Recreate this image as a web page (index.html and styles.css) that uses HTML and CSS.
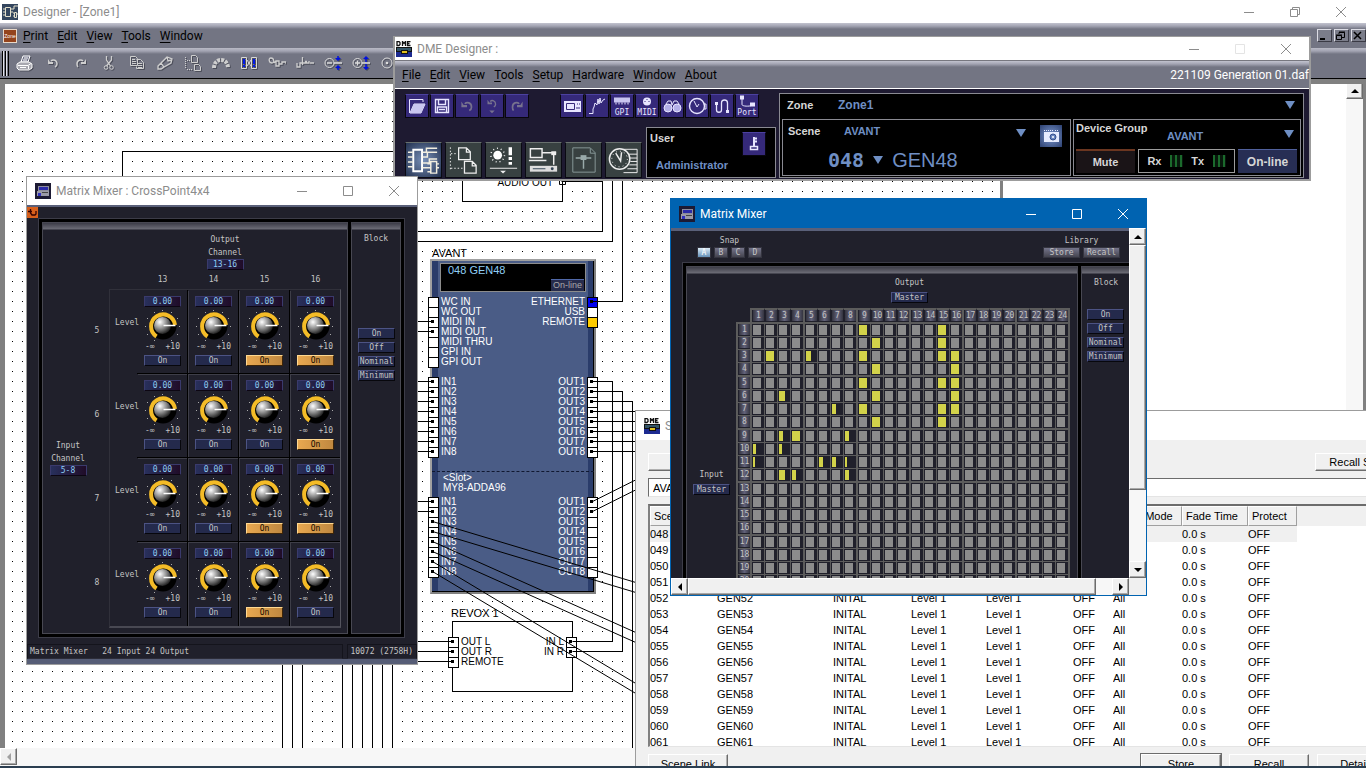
FILE: index.html
```html
<!DOCTYPE html>
<html lang="en">
<head>
    <meta charset="UTF-8">
    <meta name="viewport" content="width=device-width, initial-scale=1.0">
    <title>Designer - [Zone1]</title>
    <link rel="stylesheet" href="styles.css">
</head>
<body>
    <!-- Shared icons -->
    <svg class="defs" aria-hidden="true">
        <symbol id="i-mixer" viewBox="0 0 16 16">
            <rect width="16" height="16" fill="#1c1a33"/>
            <rect x="3.500" y="3.500" width="10" height="4" fill="#2b2ba8" stroke="#8c8c9c"/>
            <rect x="2" y="8" width="12" height="5" fill="#9a9aa8"/>
            <rect x="3" y="10" width="3" height="3" fill="#3030c0"/>
            <rect x="7" y="9" width="6" height="1" fill="#444"/>
        </symbol>
        <symbol id="i-dme" viewBox="0 0 16 16">
            <rect y="6" width="16" height="5" fill="#111"/>
            <rect y="11" width="16" height="5" fill="#1c2a90"/>
            <rect x="1" y="7" width="14" height="3" fill="#356"/>
            <rect x="5" y="9" width="7" height="4" fill="#111"/>
            <rect x="6" y="10" width="5" height="2" fill="#e0c020"/>
            <path d="M1 .5v4h2l1-1v-2l-1-1zM6.500 5V.5l1.500 2L9.500.5V5M14.500.5h-3v4h3M11.500 2.500h2" fill="none" stroke="#111" stroke-width="1.300"/>
        </symbol>
        <symbol id="i-min" viewBox="0 0 12 12"><path d="M1 6.500h10" fill="none" stroke="currentColor"/></symbol>
        <symbol id="i-max" viewBox="0 0 12 12"><path d="M1.500 1.500h9v9h-9z" fill="none" stroke="currentColor"/></symbol>
        <symbol id="i-close" viewBox="0 0 12 12"><path d="M1 1l10 10M11 1L1 11" fill="none" stroke="currentColor"/></symbol>
        <symbol id="i-restore" viewBox="0 0 12 12"><path d="M1.500 3.500h7v7h-7zM3.500 3.500v-2h7v7h-2" fill="none" stroke="currentColor"/></symbol>
        <symbol id="i-undo" viewBox="0 0 16 16"><path d="M6 6c2-2 6-1 6 3 0 1 0 2-2 3" fill="none" stroke="currentColor" stroke-width="1.500"/><path d="M3 4v5h5V7H5z" fill="currentColor"/></symbol>
        <symbol id="i-redo" viewBox="0 0 16 16"><path d="M10 6C8 4 4 5 4 9c0 1 0 2 1 3" fill="none" stroke="currentColor" stroke-width="1.500"/><path d="M13 4v5H8V7h3z" fill="currentColor"/></symbol>
    </svg>

    <!-- Designer main window -->
    <div class="designer">
        <div class="title-bar">
            <svg class="app-icon" viewBox="0 0 16 16"><rect width="16" height="16" fill="#34465e"/><path d="M3.500 3.500h5v9h-5zM1 5h2M1 8h2M1 11h2M9 5h3V2h4M9 8h2M12.500 8.500h2v5h-2zM11 9h1M11 12h1M15 10h1" fill="none" stroke="#e4e0cc"/></svg>
            <span class="title-text">Designer - [Zone1]</span>
            <div class="win-buttons">
                <button aria-label="Minimize"><svg><use href="#i-min"/></svg></button>
                <button aria-label="Restore"><svg><use href="#i-restore"/></svg></button>
                <button aria-label="Close"><svg><use href="#i-close"/></svg></button>
            </div>
        </div>
        <nav class="menu-bar">
            <span class="zone-badge">Zone</span>
            <a href="#"><u>P</u>rint</a>
            <a href="#"><u>E</u>dit</a>
            <a href="#"><u>V</u>iew</a>
            <a href="#"><u>T</u>ools</a>
            <a href="#"><u>W</u>indow</a>
            <div class="mdi-buttons">
                <button aria-label="Minimize zone"><svg viewBox="0 0 12 12"><path d="M2 9h5" stroke="#000" stroke-width="2"/></svg></button>
                <button aria-label="Restore zone"><svg viewBox="0 0 12 12"><path d="M1.500 5.500h5v4h-5zM1 5h6M4 4V2.500h5.500v5H7M4 2h6" fill="none" stroke="#000"/></svg></button>
                <button aria-label="Close zone"><svg viewBox="0 0 12 12"><path d="M2 2l7 7M9 2L2 9" stroke="#000" stroke-width="1.500"/></svg></button>
            </div>
        </nav>
        <div class="tool-bar">
            <span class="grip"></span>
            <button aria-label="Print"><svg viewBox="0 0 18 16"><path d="M5 7l2-6h7l-2 6z" fill="#73758a" stroke="#fff"/><path d="M1 9l3-2h9l3 2v4l-3 2H3l-2-2z" fill="#a8a8b0" stroke="#fff"/><path d="M2 10.500h10l3-2M12.500 11v3M4 12.500h6M8 3h4M7 5h4" fill="none" stroke="#fff"/></svg></button>
            <button aria-label="Undo"><svg><use href="#i-undo"/></svg></button>
            <button aria-label="Redo"><svg><use href="#i-redo"/></svg></button>
            <button aria-label="Cut"><svg viewBox="0 0 16 16"><path d="M5.500 1v4l4 6M10.500 1v4l-5 6" fill="none" stroke="currentColor" stroke-width="1.300"/><circle cx="5" cy="12.500" r="1.800" fill="none" stroke="currentColor"/><circle cx="10.500" cy="12.500" r="1.800" fill="none" stroke="currentColor"/></svg></button>
            <button aria-label="Copy"><svg viewBox="0 0 16 16"><path d="M1.500 1.500h5l2 2v7h-7zM3 4.500h3M3 6.500h4M3 8.500h4M7.500 4.500h4l3 3v6h-7v-2M9 8.500h4M9 10.500h4M9 12.500h4" fill="none" stroke="currentColor"/></svg></button>
            <button aria-label="Paste"><svg viewBox="0 0 16 16"><path d="M1 11l3-3 3 4-3 2H1zM4 8l6-6 5 2-1 4-7 4M10 2l1 4 4-1" fill="none" stroke="currentColor" stroke-width="1.300"/></svg></button>
            <button aria-label="Duplicate"><svg viewBox="0 0 16 16"><path d="M.5 2v12M2 14.500h5M2 5.500h3" stroke="currentColor" stroke-dasharray="1 1"/><path d="M6.500.5h4l2 2v5h-6zM9.500 9.500h4l2 2v4h-6z" fill="none" stroke="currentColor"/></svg></button>
            <button aria-label="Arc"><svg viewBox="0 0 18 16"><path d="M2 13c0-5 3-8 7-8s7 3 7 8" fill="none" stroke="currentColor" stroke-width="4" stroke-dasharray="3 1"/></svg></button>
            <button aria-label="Mirror"><svg viewBox="0 0 18 16"><path d="M1.500 2.500h5v11h-5zM11.500 2.500h5v11h-5zM7 5l4 6M11 5l-4 6" fill="none" stroke="#d8d8d8"/><path d="M4 4v5M4 10v2M14 4v5M14 10v2" stroke="#0018e8" stroke-width="2"/></svg></button>
            <button aria-label="Link"><svg viewBox="0 0 18 16"><path d="M3 3c-3 0-2 5 1 5s2-5-1-5M6 8l2-2M8 6h3v5H8zM11 9h3V7h4v2" fill="none" stroke="currentColor" stroke-width="1.300"/></svg></button>
            <button aria-label="Wire"><svg viewBox="0 0 18 16"><path d="M1 8v4h3V8h2M6.500 2v8M7 8h6v-2M14 8h4M9 6.500h2" fill="none" stroke="currentColor" stroke-width="1.300"/></svg></button>
            <button aria-label="Zoom out"><svg viewBox="0 0 18 16"><circle cx="5.500" cy="8" r="4.500" fill="none" stroke="#ddd"/><path d="M3 8h5M10 8h8" stroke="#ddd" stroke-width="1.300"/><path d="M14 1v2M14 15v-2" stroke="#0010e0" stroke-width="1.500"/><path d="M11 3h6l-3 3zM11 13h6l-3-3z" fill="#0010e0"/></svg></button>
            <button aria-label="Zoom in"><svg viewBox="0 0 18 16"><circle cx="5.500" cy="8" r="4.500" fill="none" stroke="#ddd"/><path d="M3 8h5M5.500 5.500v5M10 8h8" stroke="#ddd" stroke-width="1.300"/><path d="M14 3v4M14 13V9" stroke="#0010e0" stroke-width="1.500"/><path d="M11 4h6l-3-3zM11 12h6l-3 3z" fill="#0010e0"/></svg></button>
            <button aria-label="Zoom reset"><svg viewBox="0 0 18 16"><circle cx="7" cy="8" r="5" fill="none" stroke="#ddd"/><circle cx="7" cy="8" r="1.300" fill="#ddd"/></svg></button>
        </div>
        <div class="work-area">
            <div class="sheet">
                <div class="node node-audio"><span>AUDIO OUT</span></div>
                <div class="node-name name-avant">AVANT</div>
                <div class="node-name name-revox">REVOX 1</div>
                <div class="node avant">
                    <div class="display">
                        <span class="patch">048 GEN48</span>
                        <span class="online">On-line</span>
                    </div>
                    <div class="ports">
                        <ul>
                            <li>WC IN</li>
                            <li>WC OUT</li>
                            <li class="on">MIDI IN</li>
                            <li class="on">MIDI OUT</li>
                            <li>MIDI THRU</li>
                            <li>GPI IN</li>
                            <li>GPI OUT</li>
                        </ul>
                        <ul class="right">
                            <li class="on ethernet">ETHERNET</li>
                            <li>USB</li>
                            <li class="remote">REMOTE</li>
                        </ul>
                    </div>
                    <div class="ports">
                        <ul>
                            <li class="on">IN1</li><li class="on">IN2</li><li class="on">IN3</li><li class="on">IN4</li>
                            <li class="on">IN5</li><li class="on">IN6</li><li class="on">IN7</li><li class="on">IN8</li>
                        </ul>
                        <ul class="right">
                            <li class="on">OUT1</li><li class="on">OUT2</li><li class="on">OUT3</li><li class="on">OUT4</li>
                            <li class="on">OUT5</li><li class="on">OUT6</li><li class="on">OUT7</li><li class="on">OUT8</li>
                        </ul>
                    </div>
                    <div class="slot">&lt;Slot&gt;<br>MY8-ADDA96</div>
                    <div class="ports">
                        <ul>
                            <li class="on">IN1</li><li class="on">IN2</li><li class="on">IN3</li><li class="on">IN4</li>
                            <li class="on">IN5</li><li class="on">IN6</li><li class="on">IN7</li><li class="on">IN8</li>
                        </ul>
                        <ul class="right">
                            <li class="on">OUT1</li><li class="on">OUT2</li><li>OUT3</li><li>OUT4</li>
                            <li>OUT5</li><li>OUT6</li><li>OUT7</li><li>OUT8</li>
                        </ul>
                    </div>
                </div>
                <div class="node revox">
                    <div class="ports">
                        <ul>
                            <li class="on">OUT L</li>
                            <li class="on">OUT R</li>
                            <li class="on">REMOTE</li>
                        </ul>
                        <ul class="right">
                            <li class="on">IN L</li>
                            <li class="on">IN R</li>
                        </ul>
                    </div>
                </div>
                <!-- Wires between the nodes -->
                <svg class="wires">
                    <g transform="translate(-4.500 -83.500)" fill="none" stroke="#000">
                        <path d="M393 151H122V190"/>
                        <path d="M562 181H602V231H410M612 170V241H410M622 170V301H592"/>
                        <path d="M562 181v5M559 178h6v6h-6zM561 181h3"/>
                        <path d="M410 321h22M410 331h22M410 381h22M410 391h22M410 401h22M410 411h22M410 421h22M410 431h22M410 441h22M410 451h22M410 501h22M410 511h22"/>
                        <path d="M592 381H612V641H572M592 391H622V651H572M592 401H632V748"/>
                        <path d="M592 411h50M592 421h50M592 431h50M592 441h50M592 451h50"/>
                        <path d="M592 501L642 476M592 511L642 486M432 521L642 584M432 531L642 594M432 541L642 635M432 551L642 645M432 561L642 687M432 571L642 697"/>
                        <path d="M410 641h42M410 651h42M410 661h42"/>
                        <path d="M282 650v98M292 650v98M302 650v98M342 650v98M352 650v98M362 650v98M372 650v98M382 650v98M392 650v98"/>
                    </g>
                </svg>
            </div>
            <div class="sheet-side"></div>
            <div class="scroll vert main-scroll"><button class="arrow up" aria-label="Scroll up"></button></div>
        </div>
        <div class="scroll horz bottom-scroll"><button class="arrow left dim" aria-label="Scroll left"></button></div>
    </div>

    <!-- Scene manager window -->
    <div class="window scene-window">
        <div class="title-bar">
            <svg class="app-icon"><use href="#i-dme"/></svg>
            <span class="title-text">Scene Manager</span>
        </div>
        <div class="scene-body">
            <div class="scene-top">
                <button class="classic blank" aria-label="New"></button>
                <button class="classic">Recall Safe</button>
            </div>
            <input class="scene-combo" type="text" value="AVANT" aria-label="Device group">
            <div class="scene-list">
                <table>
                    <thead>
                        <tr><th>Scene</th><th></th><th></th><th></th><th></th><th></th><th>Fade Mode</th><th>Fade Time</th><th>Protect</th></tr>
                    </thead>
                    <tbody id="scenes"></tbody>
                </table>
            </div>
            <div class="scene-actions">
                <button class="classic">Scene Link</button>
                <button class="classic default">Store</button>
                <button class="classic">Recall</button>
                <button class="classic">Details</button>
            </div>
        </div>
    </div>

    <!-- DME Designer window -->
    <div class="window dme-window">
        <div class="title-bar">
            <svg class="app-icon"><use href="#i-dme"/></svg>
            <span class="title-text">DME Designer :</span>
            <div class="win-buttons">
                <button aria-label="Minimize"><svg><use href="#i-min"/></svg></button>
                <button class="off" aria-label="Maximize" disabled><svg><use href="#i-max"/></svg></button>
                <button aria-label="Close"><svg><use href="#i-close"/></svg></button>
            </div>
        </div>
        <nav class="menu-bar">
            <a href="#"><u>F</u>ile</a>
            <a href="#"><u>E</u>dit</a>
            <a href="#"><u>V</u>iew</a>
            <a href="#"><u>T</u>ools</a>
            <a href="#"><u>S</u>etup</a>
            <a href="#"><u>H</u>ardware</a>
            <a href="#"><u>W</u>indow</a>
            <a href="#"><u>A</u>bout</a>
            <span class="file-name">221109 Generation 01.daf</span>
        </nav>
        <div class="dme-body">
            <div class="dme-left">
                <div class="small-tools">
                    <div class="group">
                        <button aria-label="Open"><svg viewBox="0 0 20 20"><path d="M2.500 17V3.500H16V6M3 17l4-9h11l-4 9z" fill="none" stroke="#e8e6ff"/><path d="M3 17l4-9h11l-4 9z" fill="#c9c6f0"/></svg></button>
                        <button aria-label="Save"><svg viewBox="0 0 20 20"><path d="M3.500 3.500h13v13h-13zM6.500 3.500v5h7v-5M5.500 16v-5h9v5M7 13.500h6" fill="none" stroke="#e8e6ff" stroke-width="1.400"/></svg></button>
                        <button class="dim" aria-label="Undo"><svg><use href="#i-undo"/></svg></button>
                        <button class="dim" aria-label="Undo list"><svg viewBox="0 0 20 20"><use href="#i-undo" x="2" y="-1" width="16" height="16"/><path d="M7 15h6l-3 3z" fill="currentColor"/></svg></button>
                        <button class="dim" aria-label="Redo"><svg><use href="#i-redo"/></svg></button>
                    </div>
                    <div class="group">
                        <button aria-label="Panel"><svg viewBox="0 0 20 20"><rect x="2" y="5" width="17" height="11" fill="#e8e6ff"/><path d="M4.500 7.500h8v6h-8z" fill="none" stroke="#35297a"/><path d="M15 8h1M17 8h1M15 11v2M17 11v2" stroke="#35297a"/></svg></button>
                        <button aria-label="Monitor"><svg viewBox="0 0 20 20"><path d="M2 17.500h4V13l1-2 1-4 2 2 1-6 1 5 1-6 1 5 2-3 2-1" fill="none" stroke="#e8e6ff"/></svg></button>
                        <button aria-label="GPI"><svg viewBox="0 0 20 8"><rect x="2" width="16" height="5" fill="#c9c6f0"/><path d="M4 5v2M7 5v2M10 5v2M13 5v2M16 5v2" stroke="#e8e6ff"/></svg>GPI</button>
                        <button aria-label="MIDI"><svg viewBox="0 0 20 8"><circle cx="10" cy="4" r="4" fill="#e8e6ff"/><path d="M7.500 4h1M9.500 2h1M11.500 4h1" stroke="#35297a"/></svg>MIDI</button>
                        <button aria-label="Watch"><svg viewBox="0 0 20 20"><circle cx="6" cy="12" r="4" fill="#b4b0e8" stroke="#e8e6ff"/><circle cx="15" cy="12" r="4" fill="#b4b0e8" stroke="#e8e6ff"/><path d="M4 8l2-3h3l1 4 2-4h3l2 3" fill="none" stroke="#e8e6ff"/></svg></button>
                        <button aria-label="Clock"><svg viewBox="0 0 20 20"><circle cx="10" cy="10" r="7.500" fill="none" stroke="#e8e6ff" stroke-width="1.400"/><path d="M7 5l3 6 2-3M17 8h2v5h-2" fill="none" stroke="#e8e6ff"/></svg></button>
                        <button aria-label="Cable"><svg viewBox="0 0 20 20"><path d="M4.500 8v6c0 3 5 3 5 0V7c0-4 6-4 6 0v9" fill="none" stroke="#e8e6ff" stroke-width="1.300"/><path d="M3 6h3v3H3zM14 14h3v3h-3z" fill="#e8e6ff"/></svg></button>
                        <button aria-label="Port"><svg viewBox="0 0 20 12"><path d="M5 3v6c0 2 8 2 9 1" fill="none" stroke="#e8e6ff"/><path d="M3 0h4v4H3zM13 7h5v4h-5z" fill="#e8e6ff"/></svg>Port</button>
                    </div>
                </div>
                <div class="lower">
                    <div class="big-tools">
                        <button class="active" aria-label="Components"><svg viewBox="0 0 36 34"><path d="M7.500 6.500h9v22h-9z" fill="none" stroke="#fff" stroke-width="2"/><path d="M2 9h5M2 14h5M2 19h5M2 24h5M17 9h4V5h11M17 14h5v-5h10M17 20h7v-4h8M17 25h6M25.500 18.500h6v12h-6zM22 21h3M22 25h3M22 29h3M32 21h2M32 25h2" fill="none" stroke="#f2eee0" stroke-width="1.500"/></svg></button>
                        <button aria-label="Presets"><svg viewBox="0 0 36 34"><path d="M4.500 4v23M5 10.500h6M5 25.500h12" stroke="#eee" stroke-dasharray="1.500 2"/><path d="M13 4.500h8l4 4v8H13zM21 5v4h4M19 18.500h8l4 4v8H19zM27 19v4h4" fill="none" stroke="#eee" stroke-width="1.300"/></svg></button>
                        <button aria-label="Parameters"><svg viewBox="0 0 36 34"><circle cx="12" cy="12" r="4.500" fill="#fff"/><circle cx="12" cy="12" r="7" fill="none" stroke="#fff" stroke-width="1.500" stroke-dasharray="1 3"/><path d="M25 4v8M25 14v3M25 19v3" stroke="#fff" stroke-width="3.500"/><path d="M4 25.500h28" stroke="#eee"/><path d="M14.500 28h6l-3 3z" fill="#eee"/></svg></button>
                        <button aria-label="Devices"><svg viewBox="0 0 36 34"><path d="M4.500 5.500h12v9h-12zM3 17.500h16l2 0M17 9.500h14M28.500 10v12" fill="none" stroke="#eee" stroke-width="1.500"/><rect x="26" y="8" width="5" height="4" fill="#eee"/><rect x="4" y="23" width="28" height="6" fill="#ddd"/><path d="M7 26h13" stroke="#345"/><circle cx="27" cy="26" r="1.500" fill="#345"/></svg></button>
                        <button class="dim" aria-label="Page"><svg viewBox="0 0 36 34"><path d="M7 4.500h18l5 5v20H7zM25 5v5h5" fill="none" stroke="#899"/><path d="M10 15h16M18 15v11" stroke="#9aa" stroke-width="1.500"/><rect x="15" y="12" width="6" height="5" fill="#9aa"/></svg></button>
                        <button aria-label="Schedule"><svg viewBox="0 0 36 34"><path d="M18 6h14v24H18M22 11h10M24 15h8M25 18.500h7M24 22h8M22 26h10" fill="none" stroke="#eee"/><circle cx="14" cy="16" r="10.500" fill="#384141" stroke="#eee" stroke-width="1.500"/><circle cx="14" cy="16" r="8" fill="none" stroke="#eee" stroke-dasharray="1 3.200"/><path d="M10 10l5 8 1-9" fill="none" stroke="#eee" stroke-width="1.500"/></svg></button>
                    </div>
                    <div class="user-box">
                        <b>User</b>
                        <button class="key" aria-label="Security"><svg viewBox="0 0 16 16"><path d="M4.500 10.500h7v3h-7z" fill="none" stroke="#e8e6ff" stroke-width="1.500"/><path d="M8 1v9M8 2.500h3M8 5.500h3" stroke="#e8e6ff" stroke-width="2"/></svg></button>
                        <span>Administrator</span>
                    </div>
                </div>
            </div>
            <div class="dme-right">
                <div class="zone-row"><b>Zone</b><span class="value">Zone1</span><i class="drop"></i></div>
                <div class="boxes">
                    <div class="scene-box">
                        <div class="line"><b>Scene</b><span class="value">AVANT</span><i class="drop"></i>
                            <button class="camera" aria-label="Snapshot"><svg viewBox="0 0 22 22"><path d="M4 7h15v10H4z" fill="#e6ecff"/><path d="M4 5.500h9M15 5.500h4" stroke="#e6ecff" stroke-dasharray="1 1"/><circle cx="13" cy="12" r="3" fill="#6a86c0" stroke="#34508c"/><circle cx="13" cy="12" r="1" fill="#fff"/></svg></button>
                        </div>
                        <div class="current"><span class="digits">048</span><i class="drop"></i><span>GEN48</span></div>
                    </div>
                    <div class="device-box">
                        <b>Device Group</b>
                        <div class="line"><span class="value">AVANT</span><i class="drop"></i></div>
                        <div class="status">
                            <button class="mute">Mute</button>
                            <div class="rxtx">Rx <i class="leds"></i> Tx <i class="leds"></i></div>
                            <button class="online-btn">On-line</button>
                        </div>
                    </div>
                </div>
            </div>
        </div>
    </div>

    <!-- Matrix Mixer : CrossPoint4x4 -->
    <div class="window cross-window">
        <div class="title-bar">
            <svg class="app-icon"><use href="#i-mixer"/></svg>
            <span class="title-text">Matrix Mixer : CrossPoint4x4</span>
            <div class="win-buttons">
                <button aria-label="Minimize"><svg><use href="#i-min"/></svg></button>
                <button aria-label="Maximize"><svg><use href="#i-max"/></svg></button>
                <button aria-label="Close"><svg><use href="#i-close"/></svg></button>
            </div>
        </div>
        <div class="mixer">
            <button class="back" aria-label="Back"><svg viewBox="0 0 11 11"><path d="M1 4.500h4M3.500 2v4l1.500 2h3l1-1V4" fill="none" stroke="#300" stroke-width="1.300"/></svg></button>
            <div class="panels">
                <div class="panel cross-panel">
                    <div class="out-head">
                        <span>Output</span>
                        <span>Channel</span>
                        <output class="lcd">13-16</output>
                        <div class="cols"><span>13</span><span>14</span><span>15</span><span>16</span></div>
                    </div>
                    <div class="in-head">
                        <span>Input</span>
                        <span>Channel</span>
                        <output class="lcd">5-8</output>
                    </div>
                    <div class="row-nums"><span>5</span><span>6</span><span>7</span><span>8</span></div>
                    <div class="cross-grid" id="cross"></div>
                </div>
                <div class="panel block">
                    <span>Block</span>
                    <div class="block-buttons">
                        <button class="push">On</button>
                        <button class="push">Off</button>
                        <button class="push">Nominal</button>
                        <button class="push">Minimum</button>
                    </div>
                </div>
            </div>
            <div class="status-bar"><span>Matrix Mixer&nbsp;&nbsp; 24 Input 24 Output</span><span>10072 (2758H)</span></div>
        </div>
    </div>

    <!-- Matrix Mixer -->
    <div class="window matrix-window">
        <div class="title-bar">
            <svg class="app-icon"><use href="#i-mixer"/></svg>
            <span class="title-text">Matrix Mixer</span>
            <div class="win-buttons">
                <button aria-label="Minimize"><svg><use href="#i-min"/></svg></button>
                <button aria-label="Maximize"><svg><use href="#i-max"/></svg></button>
                <button aria-label="Close"><svg><use href="#i-close"/></svg></button>
            </div>
        </div>
        <div class="matrix-frame">
            <div class="mixer matrix-view">
                <div class="matrix-top">
                    <div class="snap">
                        <span>Snap</span>
                        <div><button class="sel">A</button><button>B</button><button>C</button><button>D</button></div>
                    </div>
                    <div class="library">
                        <span>Library</span>
                        <div><button>Store</button><button>Recall</button></div>
                    </div>
                </div>
                <div class="panels">
                    <div class="panel matrix-panel">
                        <div class="out-head"><span>Output</span><button class="push">Master</button></div>
                        <div class="in-head"><span>Input</span><button class="push">Master</button></div>
                        <table class="matrix" id="matrix"></table>
                    </div>
                    <div class="panel block">
                        <span>Block</span>
                        <div class="block-buttons">
                            <button class="push">On</button>
                            <button class="push">Off</button>
                            <button class="push">Nominal</button>
                            <button class="push">Minimum</button>
                        </div>
                    </div>
                </div>
            </div>
            <div class="scroll vert"><button class="arrow up" aria-label="Scroll up"></button><span class="thumb"></span><button class="arrow down" aria-label="Scroll down"></button></div>
            <div class="scroll horz"><button class="arrow left" aria-label="Scroll left"></button><span class="thumb"></span><button class="arrow right" aria-label="Scroll right"></button></div>
            <div class="corner"></div>
        </div>
    </div>

    <div class="task-bar"></div>
    <script src="script.js"></script>
</body>
</html>
```
FILE: styles.css
```css
* {
    box-sizing: border-box;
}

body {
    margin: 0;
    height: 100vh;
    overflow: hidden;
    position: relative;
    background: #fff;
    font-family: Roboto, "Open Sans", sans-serif;
    font-size: 12px;
    color: #000;
}

button {
    font: inherit;
    color: inherit;
    padding: 0;
    margin: 0;
    border: 0;
    background: none;
}

a {
    color: inherit;
    text-decoration: none;
}

u {
    text-underline-offset: 2px;
}

ul {
    list-style: none;
    margin: 0;
    padding: 0;
}

.defs {
    position: absolute;
    width: 0;
    height: 0;
}

/* Windows */
.window {
    position: absolute;
    border: 1px solid #9c9c9c;
    background: #fff;
}

.title-bar {
    display: flex;
    align-items: center;
    gap: 5px;
    height: 28px;
    padding-left: 8px;
    background: #fff;
    color: #8c8c8c;
    white-space: nowrap;
}

.app-icon {
    width: 16px;
    height: 16px;
    flex: none;
}

.win-buttons {
    display: flex;
    margin-left: auto;
}

.win-buttons button {
    width: 46px;
    height: 22px;
    display: flex;
    align-items: center;
    justify-content: center;
}

.win-buttons .off {
    color: #e4e4e4;
}

.win-buttons svg {
    width: 12px;
    height: 12px;
}

.menu-bar {
    display: flex;
    align-items: center;
    gap: 9px;
    height: 26px;
    background: linear-gradient(#c2c3cf, #a3a4b2 3px, #737583 6px, #737583);
    white-space: nowrap;
}

/* Designer */
.designer {
    display: flex;
    flex-direction: column;
    height: 100vh;
    padding-bottom: 2px;
}

.designer > .title-bar {
    height: 23px;
    padding: 0 2px;
}

.designer > .menu-bar {
    height: 25px;
    padding-left: 3px;
}

.zone-badge {
    width: 14px;
    height: 14px;
    margin-right: -3px;
    border: 1px solid #e8d8c8;
    background: #94431c;
    color: #fff;
    font: 5px/12px "Liberation Sans", sans-serif;
    text-align: center;
}

.mdi-buttons {
    display: flex;
    gap: 2px;
    margin-left: auto;
    align-items: center;
}

.mdi-buttons button {
    width: 15px;
    height: 13px;
    border: 1px solid;
    border-color: #dcdce4 #3a3a44 #3a3a44 #dcdce4;
    background: #7b7d8a;
    display: flex;
}

.mdi-buttons svg {
    width: 12px;
    height: 12px;
}

.tool-bar {
    display: flex;
    align-items: center;
    height: 31px;
    border-bottom: 1px solid #000;
    background: linear-gradient(#b9bac6, #a3a4b2 3px, #737583 6px, #737583);
    color: #cfcfcf;
}

.grip {
    width: 7px;
    height: 25px;
    margin: 0 2px;
    background: repeating-linear-gradient(90deg, #000 0 1px, #e0e0e8 1px 2px, #737583 2px 3px);
}

.tool-bar button {
    width: 28px;
    height: 24px;
    display: flex;
    align-items: center;
    justify-content: center;
    filter: drop-shadow(1px 1px 0 #4c4e5a);
}

.tool-bar svg {
    width: 18px;
    height: 16px;
}

.work-area {
    flex: 1;
    display: flex;
    min-height: 0;
    border: solid #808080;
    border-width: 5px 3px 0 5px;
    overflow: hidden;
}

.sheet {
    position: relative;
    flex: 0 0 998px;
    border-right: 3px solid #808080;
    background: conic-gradient(from 90deg at 9px 9px, #000 90deg, transparent 0) -2px -2px / 10px 10px;
    overflow: hidden;
}

.sheet-side {
    flex: 1;
}

.main-scroll {
    width: 17px;
    margin-top: -2px;
}

.bottom-scroll {
    height: 18px;
}

/* Classic scroll bars */
.scroll {
    display: flex;
    background: #f7f7f7;
}

.scroll.vert {
    flex-direction: column;
}

.arrow,
.thumb,
.corner {
    background: #f0f0f0;
}

.arrow,
.thumb {
    border: 1px solid;
    border-color: #fff #6c6c6c #6c6c6c #fff;
    box-shadow: inset -1px -1px #a8a8a8;
}

.arrow {
    width: 17px;
    height: 17px;
    flex: none;
    display: flex;
    align-items: center;
    justify-content: center;
}

.arrow::before {
    content: "";
    border: 4px solid transparent;
}

.arrow.up::before {
    border-top: 0;
    border-bottom-color: #000;
}

.arrow.down::before {
    border-bottom: 0;
    border-top-color: #000;
}

.arrow.left::before {
    border-left: 0;
    border-right-color: #000;
}

.arrow.right::before {
    border-right: 0;
    border-left-color: #000;
}

.arrow.dim::before {
    border-right-color: #a0a0a0;
}

/* Diagram */
.wires {
    position: absolute;
    inset: 0;
    width: 100%;
    height: 100%;
}

.node,
.node-name {
    position: absolute;
    font-family: "Liberation Sans", Arial, sans-serif;
}

.node {
    font-size: 10px;
    background: #fff;
}

.node-name {
    font-size: 11px;
    line-height: 14px;
}

.name-avant {
    left: 427px;
    top: 162px;
}

.name-revox {
    left: 446px;
    top: 522px;
}

.node-audio {
    left: 457px;
    top: 67px;
    width: 101px;
    height: 51px;
    border: 1px solid #000;
    padding: 25px 9px 0;
    text-align: right;
}

.avant {
    left: 425px;
    top: 175px;
    width: 166px;
    padding: 2px 0 15px;
    border: 2px solid;
    border-color: #a0a0a0 #808080 #808080 #a0a0a0;
    background: linear-gradient(90deg, #2a3c6a 6px, #4a5c86 6px calc(100% - 6px), #2a3c6a calc(100% - 6px));
    box-shadow: inset -1px -1px #000;
    color: #fff;
}

.display {
    display: flex;
    flex-direction: column;
    height: 29px;
    margin: 0 8px 5px;
    padding: 0 1px 0 7px;
    border: 1px solid #8c8c8c;
    background: #000;
}

.patch {
    font-size: 11px;
    line-height: 13px;
    color: #8fcdf5;
}

.online {
    align-self: flex-end;
    margin-top: 2px;
    padding: 0 2px;
    border-top: 1px solid #5068a8;
    background: #272c4c;
    color: #a8a8a8;
    font: 9px/11px "Liberation Sans", sans-serif;
}

.ports {
    display: flex;
    justify-content: space-between;
    margin: 0 -4px 10px;
}

.ports li {
    display: flex;
    gap: 2px;
    height: 10px;
    line-height: 9px;
}

.ports li::before {
    content: "";
    width: 9px;
    height: 9px;
    border: 1px solid #000;
    background: #fff;
}

.ports .on::before {
    background: linear-gradient(#000, #000) 2px 2px / 3px 3px no-repeat #fff;
}

.ports .ethernet::before {
    background-color: #0000f0;
}

.ports .remote::before {
    background: #ffcc00;
}

.ports .right li {
    flex-direction: row-reverse;
}

.slot {
    margin-top: 14px;
    padding: 1px 11px 4px;
    border-top: 1px dashed #101830;
    line-height: 10px;
}

.avant .ports:last-child {
    margin-bottom: 0;
}

.revox {
    left: 447px;
    top: 537px;
    width: 121px;
    height: 71px;
    border: 1px solid #000;
}

.revox .ports {
    margin: 15px -5px 0;
}

/* Scene manager */
.scene-window {
    left: 635px;
    top: 410px;
    width: 800px;
    height: 400px;
    background: #f0f0f0;
    font: 11px "Liberation Sans", Arial, sans-serif;
}

.scene-window .title-bar {
    height: 29px;
}

.scene-window .title-text {
    font: 12px Roboto, sans-serif;
}

.scene-body {
    padding: 13px 12px;
}

.scene-top {
    display: flex;
    justify-content: space-between;
    margin-bottom: 7px;
    padding-right: 14px;
}

.classic {
    width: 80px;
    height: 18px;
    background: #f0f0f0;
    border: 1px solid;
    border-color: #fff #6c6c6c #6c6c6c #fff;
    box-shadow: inset -1px -1px #b0b0b0;
}

.scene-top .classic {
    width: 93px;
}

.scene-top .classic:last-child {
    padding-right: 8px;
}

.classic.default {
    outline: 1px solid #6c6c6c;
}

.scene-combo {
    display: block;
    width: 100%;
    height: 19px;
    padding: 0 4px;
    border: 1px solid;
    border-color: #6c6c6c #fff #e4e4e4 #6c6c6c;
    font: inherit;
}

.scene-list {
    height: 243px;
    margin-top: 7px;
    border: solid;
    border-width: 2px 1px 1px 2px;
    border-color: #6c6c6c #fff #e4e4e4 #808080;
    background: linear-gradient(#f0f0f0 20px, #fff 20px);
    overflow: hidden;
}

.scene-list table {
    border-spacing: 0;
    table-layout: fixed;
    width: 647px;
}

.scene-list th,
.scene-list td {
    padding: 0;
    text-align: left;
    font-weight: normal;
    white-space: nowrap;
    overflow: hidden;
}

.scene-list th {
    height: 20px;
    padding-left: 3px;
    border: 1px solid;
    border-color: #fff #a0a0a0 #a0a0a0 #fff;
    background: #f0f0f0;
    width: 67px;
}

.scene-list th:nth-child(2) {
    width: 116px;
}

.scene-list th:nth-child(3) {
    width: 78px;
}

.scene-list th:nth-child(4) {
    width: 75px;
}

.scene-list th:nth-child(5) {
    width: 87px;
}

.scene-list th:nth-child(6) {
    width: 40px;
}

.scene-list th:nth-child(7) {
    width: 69px;
}

.scene-list th:nth-child(8) {
    width: 66px;
}

.scene-list th:nth-child(9) {
    width: 49px;
}

.scene-list td {
    height: 16px;
}

.scene-list tr:first-child td {
    background: #f0f0f0;
}

.scene-actions {
    display: flex;
    gap: 8px;
    margin-top: 7px;
}

.scene-actions .default {
    margin-left: 405px;
}

.scene-actions .classic {
    flex: none;
    height: 20px;
}

/* DME Designer */
.dme-window {
    left: 393px;
    top: 36px;
    width: 918px;
    border-width: 1px 2px 2px;
}

.dme-window .title-bar {
    height: 23px;
    padding-left: 1px;
}

.dme-window .menu-bar {
    height: 29px;
    padding-left: 7px;
    border-top: 1px solid #77777f;
    border-bottom: 1px solid #fff;
}

.file-name {
    margin-left: auto;
    color: #fff;
}

.dme-body {
    display: flex;
    gap: 3px;
    padding: 4px 5px 1px 10px;
    background: #1e1a31;
    font: bold 11px "Liberation Sans", Arial, sans-serif;
    color: #d6d6d6;
}

.dme-left {
    width: 371px;
    display: flex;
    flex-direction: column;
    justify-content: space-between;
    padding-top: 1px;
}

.small-tools,
.group {
    display: flex;
}

.small-tools {
    gap: 31px;
}

.group {
    gap: 1px;
}

.group button,
.key {
    width: 24px;
    height: 24px;
    display: flex;
    flex-direction: column;
    align-items: center;
    justify-content: center;
    border: 1px solid #08060f;
    border-top-color: #4c41a0;
    background: #35297a;
    color: #e8e6ff;
    font: 8px/9px "DejaVu Sans Mono", monospace;
}

.group svg {
    width: 20px;
    flex: 0 1 20px;
    min-height: 0;
}

.group .dim {
    color: #77728e;
}

.group .dim svg {
    width: 18px;
}

.lower {
    display: flex;
    align-items: flex-end;
    justify-content: space-between;
}

.big-tools {
    display: flex;
    gap: 3px;
}

.big-tools button {
    width: 37px;
    height: 36px;
    border: 1px solid #0a0a12;
    border-top-color: #68706e;
    background: #384141;
}

.big-tools svg {
    display: block;
    width: 35px;
    height: 34px;
}

.big-tools .active {
    background: radial-gradient(#7890b8, #22304e);
}

.user-box {
    display: grid;
    grid-template-columns: 1fr 24px;
    width: 130px;
    height: 51px;
    padding: 4px 9px 6px 3px;
    border: 1px solid #8a8a92;
    background: #000;
}

.user-box span {
    grid-column: 1 / 3;
    padding-left: 6px;
    align-self: end;
    color: #6f8fc4;
}

.key svg {
    width: 16px;
    height: 16px;
}

.dme-right {
    flex: 1;
    display: flex;
    flex-direction: column;
    border: 1px solid #8a8a92;
    background: #000;
    padding: 0 2px 1px;
}

.value {
    color: #6f8fc4;
}

.drop {
    border: 5px solid transparent;
    border-top: 8px solid #6f8fc4;
    border-bottom: 0;
}

.zone-row {
    display: flex;
    align-items: center;
    height: 25px;
    padding: 0 6px 3px 5px;
}

.zone-row b {
    width: 51px;
}

.zone-row .value {
    font-size: 12px;
}

.zone-row .drop,
.device-box .drop {
    margin-left: auto;
}

.boxes {
    display: flex;
    gap: 2px;
    flex: 1;
}

.scene-box,
.device-box {
    border: 1px solid #8a8a92;
}

.scene-box {
    flex: 1;
    padding-left: 5px;
}

.scene-box .line {
    display: flex;
    height: 25px;
}

.scene-box .line > * {
    margin-top: 5px;
}

.scene-box .line b {
    width: 56px;
}

.scene-box .line .drop {
    margin: 9px 14px 0 auto;
    align-self: flex-start;
}

.camera {
    width: 22px;
    height: 22px;
    margin-right: 8px;
    background: radial-gradient(#7c98d0, #2c4070);
}

.current {
    display: flex;
    align-items: center;
    gap: 9px;
    padding-left: 40px;
    height: 30px;
    color: #6f8fc4;
    font-size: 20px;
    font-weight: normal;
}

.digits {
    font: bold 20px "DejaVu Sans Mono", monospace;
}

.device-box {
    width: 228px;
    padding: 2px 3px 2px 2px;
    display: flex;
    flex-direction: column;
}

.device-box .line {
    display: flex;
    align-items: flex-end;
    height: 8px;
    padding: 0 3px 0 91px;
    line-height: 12px;
}

.device-box .line .drop {
    align-self: flex-start;
    margin-top: -4px;
}

.status {
    display: flex;
    gap: 3px;
    margin-top: auto;
}

.status > * {
    height: 24px;
}

.mute {
    width: 59px;
    border-top: 2px solid #6b3620;
    background: #1a1417;
}

.rxtx {
    display: flex;
    flex: 1;
    align-items: center;
    justify-content: space-evenly;
    border: 1px solid #9c9c9c;
}

.leds {
    width: 13px;
    height: 12px;
    background: repeating-linear-gradient(90deg, #1b6a2c 0 2px, #08180c 2px 5px);
}

.online-btn {
    width: 59px;
    border-top: 1px solid #50609c;
    background: #272e54;
    font-size: 12px;
}

/* Mixers */
.mixer {
    display: flex;
    flex-direction: column;
    background: #20202b;
    color: #c4c4c4;
    font: 8px/11px "DejaVu Sans Mono", monospace;
    text-align: center;
    border-top: 3px solid #5a6079;
}

.cross-window {
    left: 26px;
    top: 176px;
    width: 392px;
}

.back {
    width: 11px;
    height: 11px;
    background: #d8601c;
    display: flex;
}

.cross-window .mixer {
    border-bottom: 5px solid #565d76;
    border-top-width: 2px;
}

.panels {
    display: flex;
    gap: 3px;
    margin: 0 12px 6px 11px;
    padding: 3px;
    border: 1px solid #3c3c48;
    background: #000;
}

.panel {
    border: 1px solid #484852;
    background: linear-gradient(#3c3c47, #6c6c76 6px, #20202b 7px);
}

.cross-panel {
    display: grid;
    grid-template-columns: 50px 16px 232px 6px;
    grid-template-rows: 66px 339px 5px;
    flex: 1;
}

.cross-panel .out-head {
    grid-column: 3;
    display: flex;
    flex-direction: column;
    align-items: center;
    padding-top: 10px;
}

.out-head span {
    line-height: 13px;
}

.lcd {
    width: 37px;
    height: 11px;
    border: 1px solid #3a3a6c;
    border-bottom-color: #0c0612;
    background: linear-gradient(90deg, #28305c, #200c28);
    color: #8fcdf5;
    line-height: 9px;
}

.cols {
    display: flex;
    align-self: stretch;
    margin: 3px 0 0 28px;
}

.cols span {
    width: 51px;
    flex: none;
}

.cross-panel .in-head {
    grid-column: 1;
    grid-row: 2;
    display: flex;
    flex-direction: column;
    align-items: center;
    align-self: start;
    padding-top: 150px;
}

.in-head span {
    line-height: 13px;
}

.row-nums {
    grid-row: 2;
    grid-column: 2;
    display: flex;
    flex-direction: column;
    line-height: 84px;
    padding-right: 8px;
}

.cross-grid {
    grid-row: 2;
    grid-column: 3;
    border: 1px solid #30303a;
    border-right-color: #54545e;
    border-bottom: 2px solid #484852;
}

.cross-row {
    display: flex;
    height: 84px;
}

.cross-row > label {
    width: 27px;
    flex: none;
    padding: 27px 0 0 5px;
    white-space: nowrap;
}

.cell {
    flex: none;
    width: 51px;
    height: 84px;
    padding: 6px 6px 0 7px;
    border-right: 1px solid #000;
    border-bottom: 1px solid #000;
    box-shadow: 1px 1px #3e3e48;
}

.cell:last-child {
    width: 50px;
    border-right: 0;
    box-shadow: 0 1px #3e3e48;
}

.cross-row:last-child .cell {
    border-bottom: 0;
    box-shadow: 1px 0 #3e3e48;
}

.cross-row:last-child .cell:last-child {
    box-shadow: none;
}

.cell .lcd {
    display: block;
}

.knob {
    display: block;
    width: 37px;
    height: 35px;
}

.range {
    display: flex;
    justify-content: space-between;
    line-height: 8px;
    height: 13px;
    padding: 1px 1px 0;
    white-space: nowrap;
}

.push {
    display: block;
    width: 37px;
    height: 11px;
    border: 1px solid;
    border-color: #4c5384 #07070c #07070c #4c5384;
    background: #242a4c;
    line-height: 9px;
    white-space: nowrap;
}

.push.lit {
    border-color: #ffd890 #3c2408 #3c2408 #ffd890;
    background: linear-gradient(90deg, #e8a850, #c08840);
    color: #100800;
}

.block {
    width: 51px;
    padding-top: 10px;
}

.block-buttons {
    display: flex;
    flex-direction: column;
    gap: 3px;
    margin: 84px 0 0 6px;
}

.status-bar {
    display: flex;
    justify-content: space-between;
    gap: 4px;
    text-align: left;
    line-height: 13px;
}

.status-bar span {
    border: 1px solid #14141c;
    border-bottom-color: #2c2c38;
    padding: 0 3px 0 2px;
}

.status-bar span:first-child {
    flex: 1;
}

/* Big matrix */
.matrix-window {
    left: 670px;
    top: 198px;
    width: 477px;
    border-color: #0063b1;
}

.matrix-window .title-bar {
    height: 29px;
    background: #0063b1;
    color: #fff;
}

.matrix-frame {
    display: grid;
    grid-template-columns: 1fr 17px;
    grid-template-rows: 350px 17px;
}

.matrix-view {
    overflow: hidden;
    min-width: 0;
}

.matrix-frame .thumb {
    flex: none;
}

.matrix-frame .vert .thumb {
    height: 245px;
}

.matrix-frame .horz .thumb {
    width: 408px;
}

.matrix-frame .down,
.matrix-frame .right {
    margin: auto 0 0 auto;
}

.matrix-top {
    display: flex;
    justify-content: space-between;
    flex: none;
    padding: 3px 9px 3px 26px;
}

.matrix-top div div {
    display: flex;
    gap: 3px;
}

.matrix-top button {
    width: 14px;
    height: 11px;
    border: 1px solid #34343f;
    background: linear-gradient(#74748a, #44444f);
    line-height: 9px;
}

.matrix-top .sel {
    background: linear-gradient(#dcecf8, #6490b8);
    color: #fff;
}

.library .push,
.library button {
    width: 37px;
}

.snap > span,
.library > span {
    line-height: 13px;
}

.matrix-view .panels {
    flex: none;
    margin: 1px -30px 0 11px;
}

.matrix-panel {
    flex: none;
    width: 392px;
    display: grid;
    grid-template-columns: 49px 333px 8px;
    grid-template-rows: 41px auto;
}

.matrix-panel .out-head {
    grid-column: 2;
    display: flex;
    flex-direction: column;
    align-items: center;
    gap: 3px;
    padding: 9px 0 0 14px;
}

.matrix-panel .in-head {
    grid-row: 2;
    grid-column: 1;
    display: flex;
    flex-direction: column;
    align-items: center;
    gap: 3px;
    padding-top: 160px;
}

.matrix-view .block {
    width: 80px;
    text-align: left;
}

.matrix-view .block > span {
    padding-left: 12px;
}

.matrix-view .block-buttons {
    margin: 21px 0 0 5px;
}

.matrix-view .block .push {
    text-align: center;
}

.matrix {
    grid-row: 2;
    grid-column: 2;
    border-spacing: 0;
    align-self: start;
    justify-self: start;
    border-right: 2px solid #5c5c5c;
}

.matrix th,
.matrix td {
    padding: 0;
    border: 0 solid #5c5c5c;
}

.matrix thead th {
    border-top-width: 2px;
}

.matrix thead th + th {
    border-left: 1px solid #20202b;
}

.matrix thead th:first-child {
    border-top: 0;
}

.matrix th span {
    display: block;
    width: 11px;
    height: 11px;
    margin: 0 0 1px 1px;
    background: linear-gradient(90deg, #34343f, #62627a, #34343f);
    font-weight: normal;
    line-height: 11px;
}

.matrix tbody th {
    border-left-width: 2px;
}

.matrix tbody td,
.matrix tbody th {
    border-top-width: 1px;
}

.matrix tbody td {
    border-left-width: 1px;
}

.matrix tbody tr:nth-child(4n + 1) > * {
    border-top-width: 2px;
}

.matrix td:nth-child(4n + 2),
.matrix thead th:nth-child(4n + 2) {
    border-left: 2px solid #5c5c5c;
}

.matrix i {
    display: block;
    height: 10px;
    margin: 1px 3px 1px 1px;
    background: #8c8c8c;
}

.matrix td div {
    width: 12px;
}

.matrix .level {
    background: #d2d24a;
}

.task-bar {
    position: fixed;
    left: 0;
    right: 0;
    bottom: 0;
    height: 2px;
    background: #2b3e50;
}
```
FILE: script.js
```js
// Scene list
var scenes = document.getElementById('scenes');
for (var n = 48; n <= 61; n++) {
    var row = scenes.insertRow();
    ['0' + n, 'GEN' + n, 'INITAL', 'Level 1', 'Level 1', 'OFF', 'All', '0.0 s', 'OFF'].forEach(function (text) {
        row.insertCell().textContent = text;
    });
}

// 4x4 cross points, 1 = switched on
var lit = [[0, 0, 1, 1], [0, 0, 0, 1], [0, 0, 1, 1], [0, 0, 1, 0]];
var ticks = '';
for (var a = -150; a <= 150; a += 30) {
    var r = a * Math.PI / 180;
    ticks += '<rect x="' + Math.round(18 + 17 * Math.sin(r)) + '" y="' + Math.round(19 - 16 * Math.cos(r)) + '" width="1" height="1" fill="#aaa"/>';
}
var knob = '<svg class="knob" viewBox="0 0 37 35">' + ticks +
    '<circle cx="19" cy="19" r="13.500" fill="#000"/>' +
    '<path d="M12.500 29.500A12 12 0 1 1 31 18" fill="none" stroke="#f4bc28" stroke-width="4"/>' +
    '<circle cx="18.500" cy="18.500" r="8.500" fill="url(#ball)"/>' +
    '<path d="M19.500 18.500h12" stroke="#fff" stroke-width="1.500"/></svg>';
var html = '<svg class="defs"><radialGradient id="ball" cx=".35" cy=".3" r=".75"><stop offset="0" stop-color="#fff"/><stop offset=".5" stop-color="#909090"/><stop offset="1" stop-color="#181818"/></radialGradient></svg>';
lit.forEach(function (cells) {
    html += '<div class="cross-row"><label>Level</label>';
    cells.forEach(function (on) {
        html += '<div class="cell"><output class="lcd">0.00</output>' + knob +
            '<div class="range"><span>-∞</span><span>+10</span></div>' +
            '<button class="push' + (on ? ' lit' : '') + '">On</button></div>';
    });
    html += '</div>';
});
document.getElementById('cross').innerHTML = html;

// 24x24 matrix, level bar width in pixels by row and column
var levels = {
    1: {9: 8, 15: 8},
    2: {10: 8, 15: 8},
    3: {2: 8, 5: 5, 9: 8, 15: 8, 16: 8},
    4: {10: 8, 16: 8},
    5: {9: 8, 15: 8, 16: 8},
    6: {3: 6, 10: 8, 16: 8},
    7: {7: 4, 9: 8, 15: 8, 16: 8},
    8: {10: 8, 15: 8},
    9: {3: 4, 4: 8, 8: 4},
    10: {1: 3, 3: 3},
    11: {1: 2, 6: 4, 7: 4, 8: 2},
    12: {3: 6, 4: 4, 8: 4}
};
var table = '<thead><tr><th></th>';
for (var c = 1; c <= 24; c++) {
    table += '<th><span>' + c + '</span></th>';
}
table += '</tr></thead><tbody>';
for (var y = 1; y <= 24; y++) {
    table += '<tr><th><span>' + y + '</span></th>';
    for (var x = 1; x <= 24; x++) {
        var level = levels[y] && levels[y][x];
        table += '<td><div>' + (level ? '<i class="level" style="width: ' + level + 'px"></i>' : '<i></i>') + '</div></td>';
    }
    table += '</tr>';
}
document.getElementById('matrix').innerHTML = table + '</tbody>';
```
